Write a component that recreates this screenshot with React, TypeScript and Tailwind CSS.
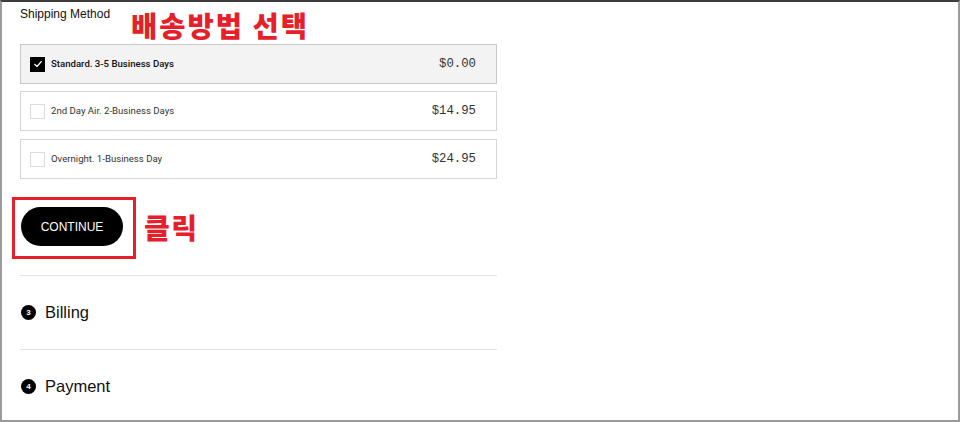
import React from "react";

type ShippingOption = {
  id: string;
  label: string;
  price: string;
  selected?: boolean;
};

const OPTIONS: ShippingOption[] = [
  { id: "standard", label: "Standard. 3-5 Business Days", price: "$0.00", selected: true },
  { id: "2day", label: "2nd Day Air. 2-Business Days", price: "$14.95" },
  { id: "overnight", label: "Overnight. 1-Business Day", price: "$24.95" },
];

const SANS = "font-['Liberation_Sans',Arial,sans-serif]";
const KR = "font-['Noto_Sans_CJK_KR','Noto_Sans',sans-serif]";

function CheckBox({ checked }: { checked?: boolean }) {
  if (checked) {
    return (
      <span className="flex h-[15px] w-[15px] shrink-0 items-center justify-center bg-black">
        <svg viewBox="0 0 12 12" className="h-[10px] w-[10px]" fill="none">
          <path d="M2 6.3 4.8 9 10 3" stroke="white" strokeWidth="1.4" strokeLinecap="round" strokeLinejoin="round" />
        </svg>
      </span>
    );
  }
  return <span className="block h-[15px] w-[15px] shrink-0 border border-[#dcdcdc] bg-white" />;
}

function OptionRow({ option }: { option: ShippingOption }) {
  return (
    <div
      className={`flex h-[40px] items-center border pl-[9px] pr-[20px] ${
        option.selected ? "border-[#c9c9c9] bg-[#f3f3f3]" : "border-[#d6d6d6] bg-white"
      }`}
    >
      <CheckBox checked={option.selected} />
      <span
        className={`ml-[6px] font-['Roboto',Arial,sans-serif] text-[9.6px] leading-[12px] ${
          option.selected ? "font-medium text-[#111]" : "text-[#333]"
        }`}
      >
        {option.label}
      </span>
      <span className="ml-auto font-['Liberation_Mono','Courier_New',monospace] text-[12.3px] text-[#333]">
        {option.price}
      </span>
    </div>
  );
}

function StepRow({ num, title }: { num: number; title: string }) {
  return (
    <div className="flex h-[73px] items-center pl-px">
      <span className="flex h-[15px] w-[15px] items-center justify-center rounded-full bg-black text-[8px] font-bold leading-none text-white">
        {num}
      </span>
      <span className="ml-[9px] text-[16.5px] text-[#111]">{title}</span>
    </div>
  );
}

export default function App() {
  return (
    <div
      className={`relative box-border h-[422px] w-[960px] overflow-hidden border-2 border-[#9b9b9b] border-t-[#3c3c3c] bg-white ${SANS}`}
    >
      <div className="w-[495px] pl-[18px] pt-[5px]">
        {/* SHIPPING METHOD */}
        <div className="text-[12px] leading-[14px] text-[#111]">Shipping Method</div>

        <div className="mt-[23px] flex flex-col">
          {OPTIONS.map((opt, i) => (
            <div key={opt.id} className={i === 0 ? "" : i === 1 ? "mt-[7px]" : "mt-[8px]"}>
              <OptionRow option={opt} />
            </div>
          ))}
        </div>

        <button
          type="button"
          className="ml-px mt-[28px] flex h-[39px] w-[102px] items-center justify-center rounded-full bg-black text-[12px] font-medium text-white"
        >
          CONTINUE
        </button>

        {/* NEXT STEPS */}
        <div className="mt-[29px] border-t border-[#e3e3e3]">
          <StepRow num={3} title="Billing" />
        </div>
        <div className="border-t border-[#e3e3e3]">
          <StepRow num={4} title="Payment" />
        </div>
      </div>

      {/* annotations */}
      <div className={`absolute left-[129px] top-[5px] text-[28.5px] font-black leading-[36px] tracking-[2px] text-[#e5202b] ${KR}`}>
        배송방법 선택
      </div>
      <div className="absolute left-[10px] top-[195px] h-[62px] w-[124px] border-[3px] border-[#e5202b]" />
      <div className={`absolute left-[142px] top-[207px] text-[28px] font-black leading-[36px] tracking-[1.5px] text-[#e5202b] ${KR}`}>
        클릭
      </div>
    </div>
  );
}
